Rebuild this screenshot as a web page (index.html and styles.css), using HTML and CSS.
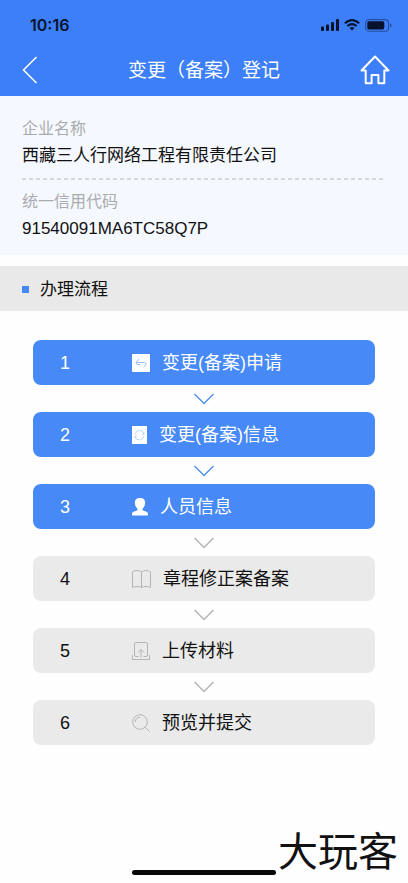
FILE: index.html
```html
<!DOCTYPE html>
<html lang="zh-CN">
<head>
<meta charset="utf-8">
<meta name="viewport" content="width=device-width, initial-scale=1">
<title>变更（备案）登记</title>
<link rel="stylesheet" href="styles.css">
</head>
<body>
<header class="top">
  <div class="status">
    <span class="time">10:16</span>
    <div class="signals">
      <svg width="18" height="12" viewBox="0 0 18 12" fill="currentColor" aria-hidden="true"><rect y="7.500" width="3" height="4.500" rx="1"/><rect x="5" y="5.500" width="3" height="6.500" rx="1"/><rect x="10" y="3" width="3" height="9" rx="1"/><rect x="15" width="3" height="12" rx="1"/></svg>
      <svg width="16" height="12" viewBox="0 0 16 12" fill="none" stroke="currentColor" stroke-width="2.100" aria-hidden="true"><path d="M.8 4.200Q8-2.100 15.200 4.200M3.300 7Q8 3.100 12.700 7"/><path d="M5.500 8.900Q8 7.100 10.500 8.900L8 11.500Z" fill="currentColor" stroke="none"/></svg>
      <svg width="27" height="13" viewBox="0 0 27 13" aria-hidden="true"><rect x=".6" y=".6" width="23" height="11.600" rx="3.500" fill="none" stroke="#274f9c" stroke-width="1.100"/><rect x="2.300" y="2.300" width="17" height="8.200" rx="1.700" fill="currentColor"/><path d="M25 4.300q1.500.7 1.500 2.100T25 8.500z" fill="#274f9c"/></svg>
    </div>
  </div>
  <nav class="nav">
    <button class="icon-button" type="button" aria-label="返回"><svg width="16" height="28" viewBox="0 0 16 28" fill="none" stroke="currentColor" stroke-width="1.500"><path d="M14.500 1L1.500 14l13 13"/></svg></button>
    <h1>变更（备案）登记</h1>
    <button class="icon-button" type="button" aria-label="首页"><svg width="30" height="30" viewBox="0 0 30 30" fill="none" stroke="currentColor" stroke-width="2" stroke-linejoin="round"><path d="M15 1.500L1.500 15.500H5.700V28.300H11.600V20H18.400V28.300H24.300V15.500H28.500Z"/></svg></button>
  </nav>
</header>
<main>
  <dl class="company">
    <div class="field"><dt>企业名称</dt><dd>西藏三人行网络工程有限责任公司</dd></div>
    <div class="field"><dt>统一信用代码</dt><dd>91540091MA6TC58Q7P</dd></div>
  </dl>
  <h2 class="section">办理流程</h2>
  <ol class="steps">
    <li class="active"><button class="step" type="button"><span class="number">1</span><svg width="18" height="18" viewBox="0 0 18 18" aria-hidden="true"><rect width="18" height="18" rx="1" fill="#fff"/><path d="M7 5L4 8.500H12.500Q14 8.500 14 10T11.500 13M4 8.500Q4 10.500 6 10.500H8" fill="none" stroke="#9ebff8"/></svg><span>变更(备案)申请</span></button>
      <svg class="arrow" width="22" height="12" viewBox="0 0 22 12" aria-hidden="true"><path d="M1.500 1L11 10.500 20.500 1"/></svg></li>
    <li class="active"><button class="step" type="button"><span class="number">2</span><svg width="15" height="18" viewBox="0 0 15 18" aria-hidden="true"><rect width="15" height="18" fill="#fff"/><path d="M3 8.500Q4 4.500 7.500 4.500T12 8M12 6v2.500h-2M12 10q-1 4-4.500 4T3 10.500M3 12.500V10h2" fill="none" stroke="#b7d0fa" stroke-width=".9"/></svg><span>变更(备案)信息</span></button>
      <svg class="arrow" width="22" height="12" viewBox="0 0 22 12" aria-hidden="true"><path d="M1.500 1L11 10.500 20.500 1"/></svg></li>
    <li class="active"><button class="step" type="button"><span class="number">3</span><svg width="16" height="18" viewBox="0 0 16 18" fill="#fff" aria-hidden="true"><path d="M8 0C4.300 0 2.800 2 2.900 5 3 8 4.300 9.500 5.500 10.900V12.200C3.500 13.300 0 13.300 0 16V17.500H16V16C16 13.300 12.500 13.300 10.500 12.200V10.900C11.700 9.500 13 8 13.100 5 13.200 2 11.700 0 8 0Z"/></svg><span>人员信息</span></button>
      <svg class="arrow next" width="22" height="12" viewBox="0 0 22 12" aria-hidden="true"><path d="M1.500 1L11 10.500 20.500 1"/></svg></li>
    <li><button class="step" type="button"><span class="number">4</span><svg class="line-icon" width="19" height="18" viewBox="0 0 19 18" aria-hidden="true"><path d="M9.500 2Q8 .5 5 .5 2 .5.500 2V17.500Q2 16.500 5 16.500 8 16.500 9.500 17.500 11 16.500 14 16.500 17 16.500 18.500 17.500V2Q17 .5 14 .5 11 .5 9.500 2ZM9.500 2V17.500"/></svg><span>章程修正案备案</span></button>
      <svg class="arrow" width="22" height="12" viewBox="0 0 22 12" aria-hidden="true"><path d="M1.500 1L11 10.500 20.500 1"/></svg></li>
    <li><button class="step" type="button"><span class="number">5</span><svg class="line-icon" width="18" height="18" viewBox="0 0 18 18" aria-hidden="true"><path d="M6.500 14.500H4Q2.500 14.500 2.500 13V2Q2.500.5 4 .5H14Q15.500.5 15.500 2V13Q15.500 14.500 14 14.500H11.500M9 15.500V7.500M6 10.500L9 7.500 12 10.500M.5 13V17.500H17.500V13"/></svg><span>上传材料</span></button>
      <svg class="arrow" width="22" height="12" viewBox="0 0 22 12" aria-hidden="true"><path d="M1.500 1L11 10.500 20.500 1"/></svg></li>
    <li><button class="step" type="button"><span class="number">6</span><svg class="line-icon" width="18" height="18" viewBox="0 0 18 18" aria-hidden="true"><circle cx="8" cy="8" r="7.300"/><path d="M13.200 13.200L17.500 17.500M3.300 8Q3.300 3.500 8 3.300"/></svg><span>预览并提交</span></button></li>
  </ol>
</main>
<footer class="bottom">
  <span class="indicator"></span>
  <span class="brand">大玩客</span>
</footer>
</body>
</html>
```
FILE: styles.css
```css
* { box-sizing: border-box; }
body {
  margin: 0;
  min-height: 100vh;
  display: flex;
  flex-direction: column;
  background: #fefefe;
  color: #111;
  font-family: "Liberation Sans", "Noto Sans CJK SC", sans-serif;
  font-size: 18px;
}
button { border: 0; padding: 0; background: none; color: inherit; font: inherit; cursor: pointer; }
svg { display: block; flex: none; }
h1, h2, dl, dd, ol { margin: 0; padding: 0; font-weight: 400; }

.top { background: #3d7ff8; color: #fff; }
.status {
  display: flex;
  align-items: center;
  justify-content: space-between;
  height: 48px;
  padding: 2px 16px 0 30px;
  color: #07132c;
}
.time { font: 600 16px/20px Inter, sans-serif; }
.signals { display: flex; align-items: center; gap: 5px; }
.nav {
  display: grid;
  grid-template-columns: 34px 1fr 34px;
  align-items: center;
  height: 48px;
  padding: 0 18px 4px;
}
.icon-button { display: flex; justify-content: flex-end; }
.icon-button:first-child { justify-content: flex-start; padding-left: 4px; }
.nav h1 { padding-top: 2px; font-size: 19px; line-height: 28px; text-align: center; white-space: nowrap; }

.company { padding: 20px 22px 4px; background: #f5f8fe; }
.field { padding-bottom: 9px; }
.field + .field {
  padding-top: 11px;
  background: repeating-linear-gradient(90deg, #d6d8dc 0 4px, transparent 4px 7px) top / 100% 2px no-repeat;
}
.field dt { color: #aaabad; font-size: 16px; line-height: 26px; }
.field dd { font-size: 17px; line-height: 27px; }

.section {
  display: flex;
  align-items: center;
  gap: 11px;
  height: 45px;
  margin-top: 11px;
  padding: 2px 22px 0;
  background: #e9e9e9;
  font-size: 17px;
  line-height: 24px;
}
.section::before { content: ""; width: 7px; height: 7px; background: #4389f7; }

.steps { padding: 29px 33px; list-style: none; }
.step {
  display: flex;
  align-items: center;
  gap: 12px;
  width: 100%;
  height: 45px;
  padding-left: 27px;
  border-radius: 8px;
  background: #eaeaea;
  text-align: left;
  line-height: 24px;
}
.step span { padding-top: 1px; }
.active .step { background: #4689f7; color: #fff; }
.number { width: 60px; }
.arrow { margin: 8px auto 7px; fill: none; stroke: #b5b5b5; stroke-width: 1.5px; }
.active .arrow { stroke: #4f91ef; }
.active .arrow.next { stroke: #b5b5b5; }
.line-icon { fill: none; stroke: #b4b4b4; stroke-width: 1px; }

.bottom {
  display: grid;
  grid-template-columns: 1fr 144px 1fr;
  align-items: end;
  margin-top: auto;
  padding-bottom: 8px;
}
.indicator { grid-column: 2; height: 5px; border-radius: 3px; background: #080808; }
.brand {
  justify-self: end;
  padding-right: 10px;
  font-size: 40px;
  line-height: 46px;
  white-space: nowrap;
}
```
